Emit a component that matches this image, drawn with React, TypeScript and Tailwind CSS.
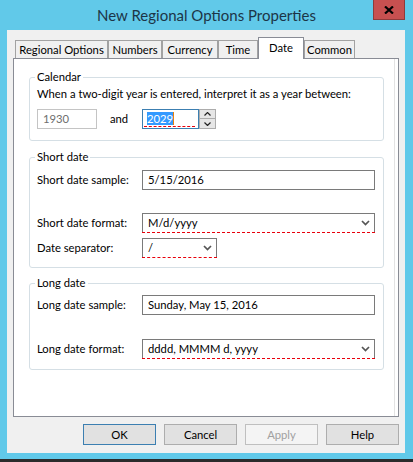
import React from "react";

const Chevron = () => (
  <svg width="9" height="6" viewBox="0 0 9 6" className="shrink-0">
    <path d="M1 1l3.5 3.5L8 1" stroke="#555555" strokeWidth="1.7" fill="none" />
  </svg>
);

const TextBox = ({ value }: { value: string }) => (
  <div className="h-[20px] border border-[#7a7a7a] bg-white flex items-center pl-[5px] leading-none">
    {value}
  </div>
);

// combo with the red dashed "modified" line in place of the bottom border
const Combo = ({ value, className = "" }: { value: string; className?: string }) => (
  <div className={`flex flex-col ${className}`}>
    <div className="h-[19px] border border-b-0 border-[#7a7a7a] bg-white flex items-center justify-between pl-[5px] pr-[4px] leading-none">
      <span>{value}</span>
      <Chevron />
    </div>
    <div className="border-b border-dashed border-[#e8000b]" />
  </div>
);

const Group = ({ title, className = "", children }: { title: string; className?: string; children: React.ReactNode }) => (
  <fieldset className={`border border-[#d5dfe5] rounded-[3px] pl-[7px] pr-[8px] ${className}`}>
    <legend className="-ml-[2px] px-[2px] leading-[16px]">{title}</legend>
    {children}
  </fieldset>
);

const Row = ({ label, className = "", children }: { label: string; className?: string; children: React.ReactNode }) => (
  <div className={`flex items-center ${className}`}>
    <span className="w-[105px] shrink-0">{label}</span>
    <div className="flex-1">{children}</div>
  </div>
);

const tabs = [
  { name: "Regional Options", w: "w-[93px]" },
  { name: "Numbers", w: "w-[54px]" },
  { name: "Currency", w: "w-[56px]" },
  { name: "Time", w: "w-[40px]" },
  { name: "Date", w: "w-[46px]", active: true },
  { name: "Common", w: "w-[51px]" },
];

const buttons = [
  { name: "OK", cls: "border-[#3c7fb1] bg-[#e1e1e1] text-black" },
  { name: "Cancel", cls: "border-[#adadad] bg-[#e1e1e1] text-black" },
  { name: "Apply", cls: "border-[#bfbfbf] bg-[#f4f4f4] text-[#a0a0a0]" },
  { name: "Help", cls: "border-[#adadad] bg-[#e1e1e1] text-black" },
];

export default function App() {
  return (
    <div className="w-[413px] h-[462px] bg-[#61c9e9] flex flex-col overflow-hidden font-['Lato',sans-serif] text-[11.25px] leading-[16px] text-black whitespace-nowrap">
      {/* title bar */}
      <div className="relative h-[30px] shrink-0 flex items-center justify-center">
        <span className="text-[15px] text-[#1c3547] -mt-[1px]">New Regional Options Properties</span>
        <div className="absolute right-[8px] top-0 w-[32px] h-[20px] bg-[#c75050] border border-t-0 border-[#8e3b3b] flex items-center justify-center">
          <svg width="10" height="8" viewBox="0 0 10 8">
            <path d="M1 0.5l8 7M9 0.5l-8 7" stroke="#000" strokeWidth="2.2" />
          </svg>
        </div>
      </div>

      {/* client area */}
      <div className="ml-[7px] w-[398px] h-[423px] shrink-0 bg-[#f0f0f0] px-[6px] pt-[7px] flex flex-col">
        <div className="h-[21px] flex items-end pl-[2px] relative z-10">
          {tabs.map((t) =>
            t.active ? (
              <div
                key={t.name}
                className={`${t.w} h-[22px] -mb-px bg-white border border-b-0 border-[#898c95] flex items-center justify-center pb-[2px]`}
              >
                {t.name}
              </div>
            ) : (
              <div
                key={t.name}
                className={`${t.w} h-[18px] bg-[#f0f0f0] border border-b-0 border-[#a2a2a2] flex items-center justify-center`}
              >
                {t.name}
              </div>
            )
          )}
        </div>

        <div className="h-[359px] border border-[#898c95] bg-white flex">
          <div className="flex-1 pl-[15px] pr-[10px] pt-[10px]">
            <Group title="Calendar" className="pb-[11px]">
              <div className="mt-[1px]">When a two-digit year is entered, interpret it as a year between:</div>
              <div className="mt-[7px] flex items-center">
                <div className="w-[105px] flex items-center">
                  <div className="w-[60px] h-[20px] border border-[#c4c4c4] bg-white text-[#6d6d6d] flex items-center pl-[5px] leading-none">
                    1930
                  </div>
                  <span className="ml-[13px]">and</span>
                </div>
                <div className="w-[57px] h-[20px] border border-[#3c7fb1] bg-white flex flex-col pl-[1px] pt-[2px]">
                  <div className="flex items-center h-[13px] pl-[3px]">
                    <span className="bg-[#3399ff] text-white leading-[13px]">2029</span>
                    <span className="w-[1px] h-[13px] bg-[#e8820c]" />
                  </div>
                  <div className="mt-[1px] w-[51px] border-b border-dashed border-[#e8000b]" />
                </div>
                <div className="w-[17px] h-[20px] flex flex-col">
                  <div className="h-[10px] border border-[#acacac] bg-[#e6e6e6] flex items-center justify-center">
                    <svg width="7" height="4" viewBox="0 0 7 4">
                      <path d="M0.5 3.5l3-3 3 3" stroke="#222" strokeWidth="1.2" fill="none" />
                    </svg>
                  </div>
                  <div className="h-[10px] border border-t-0 border-[#acacac] bg-[#e6e6e6] flex items-center justify-center">
                    <svg width="7" height="4" viewBox="0 0 7 4">
                      <path d="M0.5 0.5l3 3 3-3" stroke="#222" strokeWidth="1.2" fill="none" />
                    </svg>
                  </div>
                </div>
              </div>
            </Group>

            <Group title="Short date" className="mt-[8px] pb-[9px]">
              <Row label="Short date sample:" className="mt-[5px]">
                <TextBox value="5/15/2016" />
              </Row>
              <Row label="Short date format:" className="mt-[23px]">
                <Combo value="M/d/yyyy" />
              </Row>
              <Row label="Date separator:" className="mt-[5px]">
                <Combo value="/" className="w-[75px]" />
              </Row>
            </Group>

            <Group title="Long date" className="mt-[7px] pb-[10px]">
              <Row label="Long date sample:" className="mt-[4px]">
                <TextBox value="Sunday, May 15, 2016" />
              </Row>
              <Row label="Long date format:" className="mt-[24px]">
                <Combo value="dddd, MMMM d, yyyy" />
              </Row>
            </Group>
          </div>
          {/* faint inner edge near the right border */}
          <div className="w-px bg-[#e3e3e3] mr-[3px]" />
        </div>

        <div className="mt-[7px] flex justify-end gap-[8px]">
          {buttons.map((b) => (
            <div key={b.name} className={`w-[73px] h-[21px] border flex items-center justify-center ${b.cls}`}>
              {b.name}
            </div>
          ))}
        </div>
      </div>

      <div className="flex-1" />
      <div className="h-[3px] bg-[#2b2b2b]" />
    </div>
  );
}
